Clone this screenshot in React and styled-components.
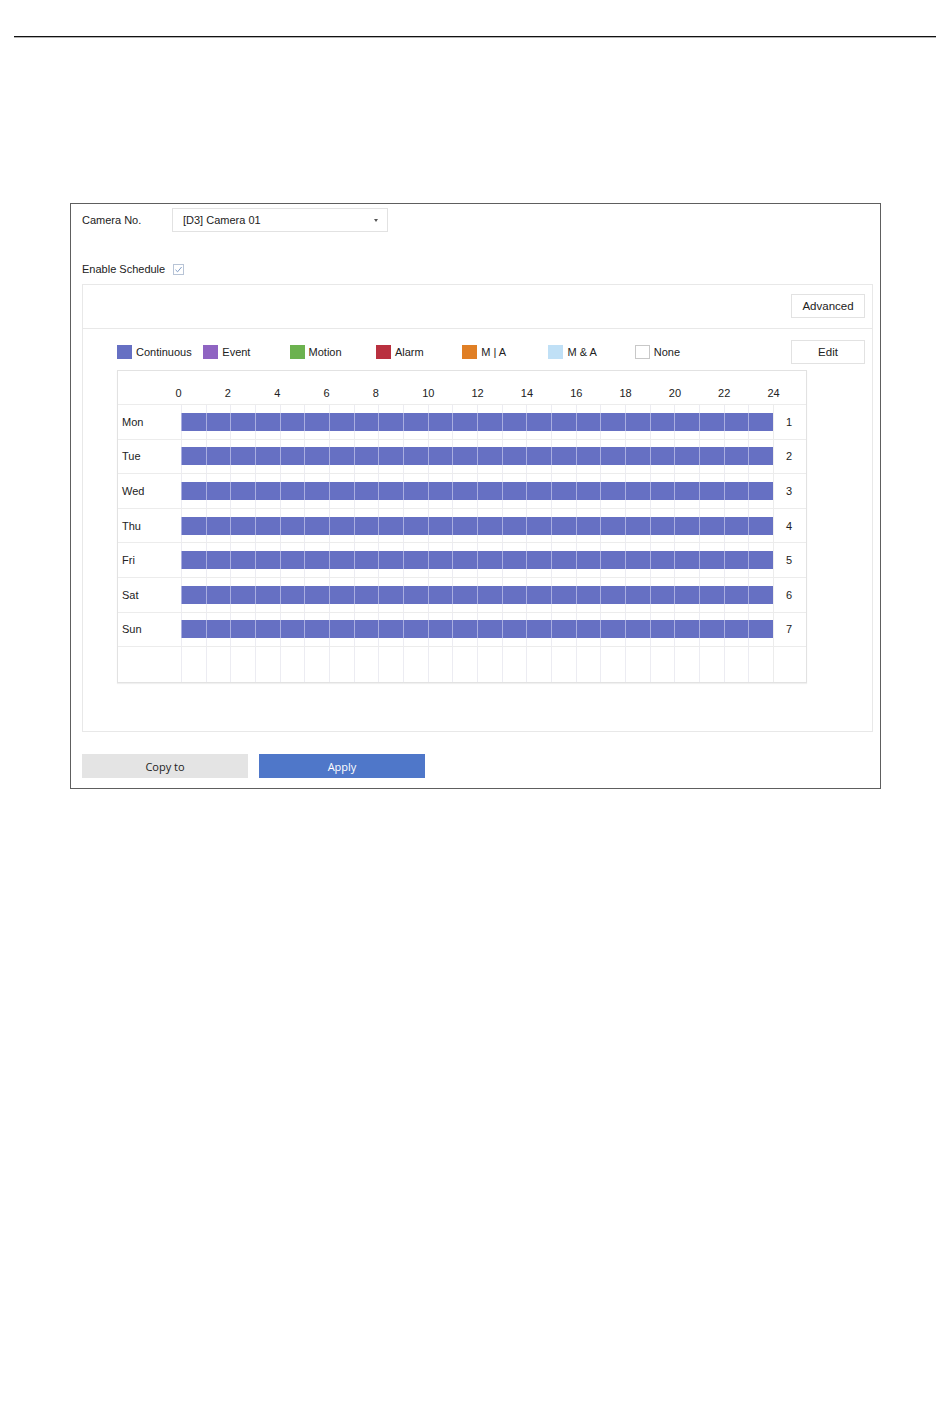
import React from "react";
import styled, { createGlobalStyle } from "styled-components";

const GlobalStyle = createGlobalStyle`
  html, body {
    margin: 0;
    padding: 0;
    background: #fff;
  }
  body {
    font-family: "Liberation Sans", Arial, sans-serif;
    font-size: 11px;
    color: #222;
  }
`;

const legend = [
  { label: "Continuous", color: "#6670c3" },
  { label: "Event", color: "#8f64c2" },
  { label: "Motion", color: "#6cb24f" },
  { label: "Alarm", color: "#b9303f" },
  { label: "M | A", color: "#e07f25" },
  { label: "M & A", color: "#c0e0f6" },
  { label: "None", color: "#fff", outline: true },
];

const days = ["Mon", "Tue", "Wed", "Thu", "Fri", "Sat", "Sun"];
const hours = Array.from({ length: 13 }, (_, i) => i * 2);
const cells = Array.from({ length: 24 }, (_, i) => i);

export default function App() {
  return (
    <Page>
      <GlobalStyle />
      <Rule />
      <Frame>
        <FieldRow>
          <FieldLabel>Camera No.</FieldLabel>
          <Select>
            <span>[D3] Camera 01</span>
            <Caret />
          </Select>
        </FieldRow>
        <EnableRow>
          Enable Schedule
          <CheckBox>
            <svg width="9" height="9" viewBox="0 0 9 9">
              <path d="M1.5 4.8 L3.6 6.8 L7.6 2" fill="none" stroke="#7f9cc6" strokeWidth="1" />
            </svg>
          </CheckBox>
        </EnableRow>
        <Panel>
          <PanelHead>
            <Button>Advanced</Button>
          </PanelHead>
          <PanelBody>
            <LegendRow>
              <Legend>
                {legend.map((l) => (
                  <LegendItem key={l.label}>
                    <Swatch $color={l.color} $outline={l.outline} />
                    {l.label}
                  </LegendItem>
                ))}
              </Legend>
              <Button>Edit</Button>
            </LegendRow>
            <Grid>
              <HourRow>
                {hours.map((h) => (
                  <HourLabel key={h}>{h}</HourLabel>
                ))}
              </HourRow>
              {days.map((d, i) => (
                <DayRow key={d}>
                  <DayName>{d}</DayName>
                  <Track>
                    {cells.map((c) => (
                      <Hour key={c}>
                        <Fill />
                      </Hour>
                    ))}
                  </Track>
                  <DayNum>{i + 1}</DayNum>
                </DayRow>
              ))}
              <DayRow $last>
                <DayName />
                <Track>
                  {cells.map((c) => (
                    <Hour key={c} />
                  ))}
                </Track>
                <DayNum />
              </DayRow>
            </Grid>
          </PanelBody>
        </Panel>
        <Actions>
          <ActionButton>Copy to</ActionButton>
          <ActionButton $primary>Apply</ActionButton>
        </Actions>
      </Frame>
    </Page>
  );
}

// Styling
const Page = styled.div`
  width: 950px;
  height: 1420px;
  padding-top: 36px;
  box-sizing: border-box;
`;

const Rule = styled.div`
  margin: 0 14px;
  height: 1px;
  background: #111;
  box-shadow: 0 0.5px 0 #666;
`;

const Frame = styled.div`
  margin: 166px 0 0 70px;
  width: 811px;
  height: 586px;
  box-sizing: border-box;
  border: 1px solid #5e5e5e;
  padding: 4px 7px 0 11px;
  display: flex;
  flex-direction: column;
`;

const FieldRow = styled.div`
  display: flex;
  align-items: center;
  height: 24px;
`;

const FieldLabel = styled.div`
  width: 90px;
`;

const Select = styled.div`
  width: 216px;
  height: 24px;
  box-sizing: border-box;
  border: 1px solid #e2e2e2;
  display: flex;
  align-items: center;
  justify-content: space-between;
  padding: 0 9px 0 10px;
`;

const Caret = styled.span`
  width: 0;
  height: 0;
  border-left: 2.5px solid transparent;
  border-right: 2.5px solid transparent;
  border-top: 3px solid #555;
`;

const EnableRow = styled.div`
  display: flex;
  align-items: center;
  gap: 8px;
  height: 22px;
  margin-top: 26px;
`;

const CheckBox = styled.span`
  width: 11px;
  height: 11px;
  box-sizing: border-box;
  border: 1px solid #b8c4d6;
  display: flex;
  align-items: center;
  justify-content: center;
`;

const Panel = styled.div`
  margin-top: 4px;
  height: 448px;
  box-sizing: border-box;
  border: 1px solid #e8e8e8;
  display: flex;
  flex-direction: column;
`;

const PanelHead = styled.div`
  display: flex;
  justify-content: flex-end;
  padding: 9px 7px 10px;
  border-bottom: 1px solid #e8e8e8;
`;

const PanelBody = styled.div`
  padding: 11px 7px 0 34px;
`;

const Button = styled.div`
  width: 74px;
  height: 24px;
  box-sizing: border-box;
  border: 1px solid #e2e2e2;
  display: flex;
  align-items: center;
  justify-content: center;
  font-size: 11.5px;
`;

const LegendRow = styled.div`
  display: flex;
  align-items: center;
  justify-content: space-between;
`;

const Legend = styled.div`
  display: flex;
`;

const LegendItem = styled.div`
  width: 86.3px;
  display: flex;
  align-items: center;
  gap: 4px;
`;

const Swatch = styled.span`
  width: 15px;
  height: 14px;
  box-sizing: border-box;
  background: ${(p) => p.$color};
  border: ${(p) => (p.$outline ? "1px solid #c8c8c8" : "none")};
`;

const Grid = styled.div`
  margin-top: 6px;
  width: 690px;
  box-sizing: border-box;
  border: 1px solid #e2e2e2;
  box-shadow: 0 1px 1px rgba(0, 0, 0, 0.06);
`;

/* hour numbers start a few px before their boundary line */
const HourRow = styled.div`
  display: flex;
  height: 34px;
  align-items: flex-end;
  padding: 0 0 5px 57.5px;
  box-sizing: border-box;
  border-bottom: 1px solid #ececec;
`;

const HourLabel = styled.span`
  width: 49.33px;
  flex-shrink: 0;
  text-align: left;
`;

const DayRow = styled.div`
  display: flex;
  height: 34.6px;
  box-sizing: border-box;
  border-bottom: ${(p) => (p.$last ? "none" : "1px solid #ececec")};
`;

const DayName = styled.div`
  width: 63px;
  padding-left: 4px;
  box-sizing: border-box;
  display: flex;
  align-items: center;
`;

const Track = styled.div`
  width: 592px;
  display: grid;
  grid-template-columns: repeat(24, 1fr);
`;

const Hour = styled.div`
  border-left: 1px solid #ececf2;
  display: flex;
  align-items: center;
`;

const Fill = styled.div`
  flex: 1;
  height: 18px;
  background: #6670c3;
  box-shadow: -1px 0 0 #a9aee0;
`;

const DayNum = styled.div`
  flex: 1;
  border-left: 1px solid #ececec;
  padding-left: 12px;
  display: flex;
  align-items: center;
`;

const Actions = styled.div`
  display: flex;
  gap: 11px;
  margin-top: 22px;
`;

const ActionButton = styled.div`
  width: 166px;
  height: 24px;
  display: flex;
  align-items: center;
  justify-content: center;
  font-family: "Open Sans", "Liberation Sans", sans-serif;
  font-size: 11px;
  background: ${(p) => (p.$primary ? "#4f77c9" : "#e4e4e4")};
  color: ${(p) => (p.$primary ? "#fff" : "#222")};
`;
